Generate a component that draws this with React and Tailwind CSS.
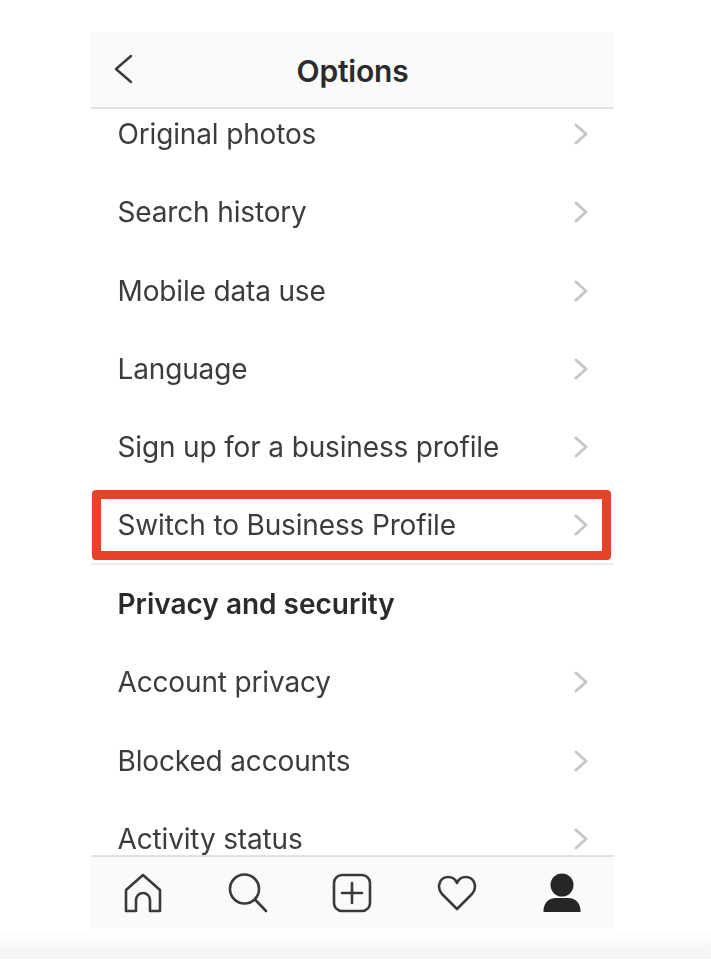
const rows = [
  { label: "Original photos" },
  { label: "Search history" },
  { label: "Mobile data use" },
  { label: "Language" },
  { label: "Sign up for a business profile" },
  { label: "Switch to Business Profile", marked: true },
  { label: "Privacy and security", heading: true },
  { label: "Account privacy" },
  { label: "Blocked accounts" },
  { label: "Activity status" },
];

function Chevron() {
  return (
    <svg width="14" height="22" viewBox="0 0 14 22" fill="none" stroke="#c6c6c6" strokeWidth="3" strokeLinecap="round" strokeLinejoin="round">
      <path d="M2 2 L12 11 L2 20" />
    </svg>
  );
}

function Row({ label, heading, marked }) {
  return (
    <div className={`relative flex h-[78.33px] shrink-0 items-center justify-between pl-[26.5px] pr-[26px] ${marked ? "border-b-2 border-[#ececec]" : ""}`}>
      <span className={`text-[28px] leading-none ${heading ? "font-semibold text-[#2b2b2b]" : "tracking-[-0.15px] text-[#3c3c3c]"}`}>{label}</span>
      {!heading && <Chevron />}
      {marked && <div className="absolute inset-x-0 top-[3.4px] bottom-[3px] mr-[3px] ml-[1px] rounded-[4px] border-[9px] border-[#e8412a]" />}
    </div>
  );
}

export default function App() {
  return (
    <div className="flex h-[962px] w-[711px] flex-col overflow-hidden bg-white font-['Inter',sans-serif]">
      <div className="ml-[91px] mt-[32px] flex h-[897px] w-[523px] flex-col blur-[0.5px]">
        <div className="relative flex h-[77px] shrink-0 items-center justify-center border-b-2 border-[#e2e2e2] bg-[#fafafa]">
          <svg className="absolute left-[23px] top-[22px] h-[30px] w-[19px]" viewBox="0 0 19 30" fill="none" stroke="#3a3a3a" strokeWidth="2.4" strokeLinecap="round" strokeLinejoin="round">
            <path d="M17 2 L2 15 L17 28" />
          </svg>
          <span className="mt-[2px] text-[30px] font-semibold leading-none tracking-[-0.2px] text-[#2b2b2b]">Options</span>
        </div>
        <div className="min-h-0 flex-1 overflow-hidden">
          <div className="-mt-[14px] flex flex-col">
            {rows.map((r) => (
              <Row key={r.label} {...r} />
            ))}
          </div>
        </div>
        <div className="grid h-[74px] shrink-0 grid-cols-5 items-center justify-items-center border-t-2 border-[#e2e2e2] bg-[#fafafa]">
          <svg width="38" height="40" viewBox="0 0 38 40" fill="none" stroke="#3a3a3a" strokeWidth="2.6" strokeLinejoin="round">
            <path d="M2 38 V17 L19 2 L36 17 V38 H26 V27 A7 7 0 0 0 12 27 V38 Z" />
          </svg>
          <svg width="40" height="40" viewBox="0 0 40 40" fill="none" stroke="#3a3a3a" strokeWidth="2.6" strokeLinecap="round">
            <circle cx="16.5" cy="16" r="14.5" />
            <path d="M27 26.5 L38 38" />
          </svg>
          <svg width="40" height="40" viewBox="0 0 40 40" fill="none" stroke="#3a3a3a" strokeWidth="2.6" strokeLinecap="round">
            <rect x="2" y="2" width="36" height="36" rx="8" />
            <path d="M20 10 V30 M10 20 H30" />
          </svg>
          <svg width="40" height="36" viewBox="0 0 40 36" fill="none" stroke="#3a3a3a" strokeWidth="2.6" strokeLinejoin="round">
            <path d="M20 34 L5 19 C-1 12 3 2 11 2 C15 2 18.5 4 20 8 C21.5 4 25 2 29 2 C37 2 41 12 35 19 Z" />
          </svg>
          <svg width="38" height="40" viewBox="0 0 38 40" fill="#262626">
            <circle cx="19" cy="12" r="11.5" />
            <path d="M0.5 39 C0 31 5 25 13 25 H25 C33 25 38 31 37.5 39 Z" />
          </svg>
        </div>
      </div>
      <div className="h-[30px] w-full shrink-0 bg-gradient-to-b from-white to-[#f4f4f4]" />
    </div>
  );
}
